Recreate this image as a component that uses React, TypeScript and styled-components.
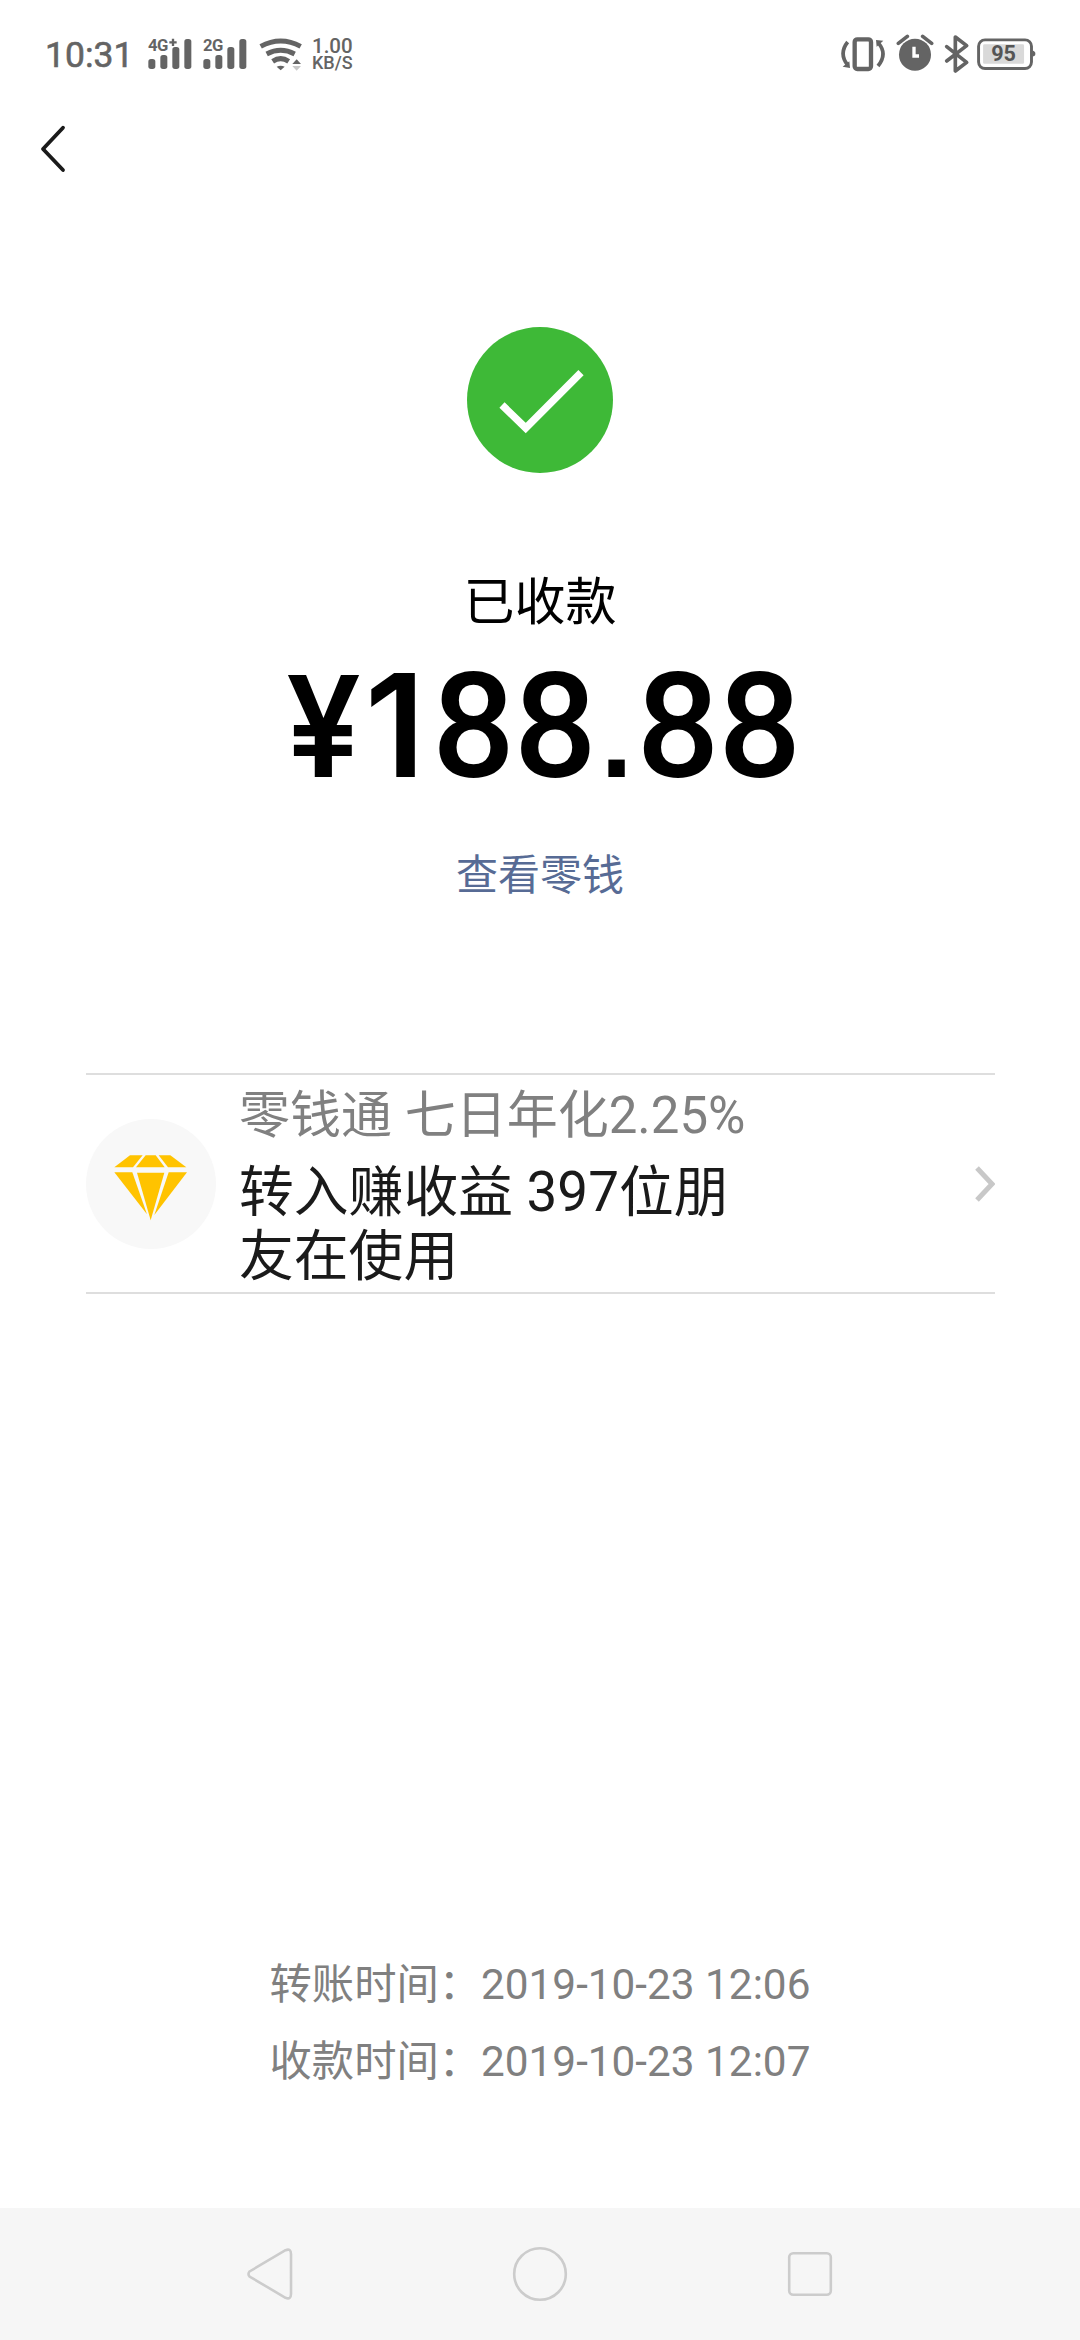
import React from "react";
import styled, { createGlobalStyle } from "styled-components";

const GlobalStyle = createGlobalStyle`
  * { box-sizing: border-box; }
  body {
    margin: 0;
    background: #ffffff;
    font-family: Roboto, "Noto Sans CJK SC", sans-serif;
    -webkit-font-smoothing: antialiased;
  }
`;

const INK = "#646464";

const Screen = styled.main`
  width: 1080px;
  height: 2340px;
  display: flex;
  flex-direction: column;
  background: #ffffff;
  overflow: hidden;
`;

const StatusBar = styled.header`
  height: 90px;
  padding: 20px 44px 0 45px;
  display: flex;
  justify-content: space-between;
  color: ${INK};
`;

const StatusGroup = styled.div`
  display: flex;
  height: 70px;
`;

const Clock = styled.span`
  width: 101px;
  font-size: 35.5px;
  font-weight: 400;
  -webkit-text-stroke: 0.6px ${INK};
  line-height: 70px;
  white-space: nowrap;
`;

const StatusIcon = styled.svg<{ $w: number; $gap?: number }>`
  width: ${(p) => p.$w}px;
  height: 70px;
  margin-right: ${(p) => p.$gap ?? 0}px;
  flex: none;
`;

const Speed = styled.div`
  display: flex;
  flex-direction: column;
  padding-top: 17px;
  font-weight: 500;
  font-size: 20.5px;
  line-height: 19px;
`;

const SpeedUnit = styled.span`
  font-size: 18px;
  line-height: 14px;
`;

const TitleBar = styled.nav`
  height: 120px;
  padding: 34px 0 0 36px;
`;

const Result = styled.section`
  display: flex;
  flex-direction: column;
  align-items: center;
  height: 863px;
  padding-top: 117px;
`;

const ResultLabel = styled.h1`
  margin: 92px 0 0;
  height: 76px;
  line-height: 76px;
  font-size: 51px;
  font-weight: 400;
  color: #000;
`;

const Amount = styled.div`
  align-self: stretch;
  height: 170px;
  padding-left: 286px;
  line-height: 174px;
  font-size: 146px;
  font-weight: 500;
  letter-spacing: -1.2px;
  color: #000;
  white-space: nowrap;
`;

const AmountLead = styled.span`
  font-family: Inter, sans-serif;
  font-size: 143px;
  font-weight: 600;
  line-height: 1px;
  margin-right: 8px;
`;

const Currency = styled.span`
  display: inline-block;
  margin-right: 1px;
  font-size: 140px;
  transform: scaleX(0.95);
  transform-origin: left;
`;

const AmountPoint = styled.span`
  display: inline-block;
  width: 41px;
  text-align: center;
  font-family: "Liberation Sans", sans-serif;
  font-size: 116px;
  font-weight: 700;
  line-height: 1px;
`;

const BalanceLink = styled.a`
  margin-top: 34px;
  height: 62px;
  line-height: 62px;
  font-size: 42px;
  font-weight: 400;
  color: #576b95;
`;

const Promo = styled.section`
  width: 909px;
  height: 221px;
  margin-left: 86px;
  border-top: 2px solid #dedede;
  border-bottom: 2px solid #dedede;
  display: flex;
  align-items: center;
`;

const PromoBadge = styled.div`
  width: 130px;
  height: 130px;
  margin-right: 23px;
  padding-top: 8px;
  border-radius: 50%;
  background: #f8f8f8;
  display: flex;
  align-items: center;
  justify-content: center;
`;

const PromoText = styled.div`
  width: 500px;
  padding-top: 3px;
  display: flex;
  flex-direction: column;
`;

const PromoTitle = styled.span`
  height: 77px;
  font-size: 51px;
  line-height: 66px;
  color: #808080;
  white-space: nowrap;
`;

const PromoBody = styled.span`
  font-size: 54.8px;
  line-height: 64px;
  color: #1a1a1a;
`;

const PromoArrow = styled.svg`
  margin-left: auto;
  width: 21px;
  height: 38px;
`;

const Times = styled.section`
  flex: 1;
  display: flex;
  flex-direction: column;
  align-items: center;
  padding-top: 652px;
`;

const TimeRow = styled.div`
  height: 77px;
  line-height: 77px;
  font-size: 42.3px;
  font-weight: 400;
  color: #808080;
  white-space: pre;
`;

const SystemNav = styled.footer`
  height: 132px;
  padding: 0 135px;
  background: #f6f6f6;
  display: grid;
  grid-template-columns: repeat(3, 1fr);
  align-items: center;
  justify-items: center;
`;

const NavIcon = styled.svg`
  width: 60px;
  height: 60px;
  fill: none;
  stroke: #cccccc;
  stroke-width: 2.6;
`;

function Signal({ label, plus }: { label: string; plus?: boolean }) {
  return (
    <>
      {[
        [7, 117],
        [43, 105],
        [79, 81],
        [115, 57],
      ].map(([x, y]) => (
        <rect key={x} x={x} y={y} width={21} height={147 - y} rx={8} />
      ))}
      <text x={6} y={94} fontSize={50} fontWeight={700} letterSpacing={-2}>
        {label}
      </text>
      {plus && <path d="M70 67H92M81 56V78" stroke={INK} strokeWidth={7} />}
    </>
  );
}

export default function App() {
  return (
    <Screen>
      <GlobalStyle />
      <StatusBar>
        <StatusGroup>
          <Clock>10:31</Clock>
          <StatusIcon $w={48} $gap={7} viewBox="0 0 144 210" fill={INK}>
            <Signal label="4G" plus />
          </StatusIcon>
          <StatusIcon $w={48} $gap={9} viewBox="0 0 144 210" fill={INK}>
            <Signal label="2G" />
          </StatusIcon>
          <StatusIcon $w={46} $gap={8} viewBox="684 0 138 210" fill="none" stroke={INK} strokeWidth={15}>
            <path d="M692 79Q752 47 812 79" />
            <path d="M710 102Q752 80 794 102" />
            <path d="M728 124Q752 108 776 124" />
            <path d="M740 140Q752 134 764 140L752 151Z" fill={INK} stroke="none" />
            <path d="M787 132L800 118L813 132Z" fill={INK} stroke="none" />
            <path d="M787 138L800 152L813 138Z" fill="#c8c8c8" stroke="none" />
          </StatusIcon>
          <Speed>
            1.00
            <SpeedUnit>KB/S</SpeedUnit>
          </Speed>
        </StatusGroup>
        <StatusGroup>
          <StatusIcon $w={46} $gap={10} viewBox="54 0 138 210" fill="none" stroke={INK} strokeWidth={11}>
            <rect x={98} y={58} width={49} height={89} rx={8} strokeWidth={13} />
            <path d="M77 66Q50 100 76 134" />
            <path d="M168 138Q197 102 170 70" />
            <path d="M62 140L84 144L82 124Z" fill={INK} stroke="none" />
            <path d="M184 62L162 60L164 80Z" fill={INK} stroke="none" />
          </StatusIcon>
          <StatusIcon $w={38} $gap={10} viewBox="222 0 114 210" fill="none" stroke={INK} strokeWidth={11} strokeLinecap="round">
            <circle cx={279} cy={104} r={48} fill={INK} stroke="none" />
            <path d="M276 80V108H291" stroke="#fff" strokeWidth={10} strokeLinecap="butt" />
            <path d="M229 70L256 49M302 49L329 70" />
          </StatusIcon>
          <StatusIcon $w={26} $gap={6} viewBox="366 0 78 210" fill="none" stroke={INK} strokeWidth={11} strokeLinejoin="round" strokeLinecap="round">
            <path d="M374 80L434 127L400 153V51L434 77L374 123" />
          </StatusIcon>
          <StatusIcon $w={60} viewBox="462 0 186 210" fill="none" stroke={INK}>
            <rect x={470} y={58} width={164} height={89} rx={20} strokeWidth={9} />
            <path d="M637 91Q646 93 646 101T637 110Z" fill={INK} stroke="none" />
            <rect x={484} y={72} width={127} height={60} rx={4} fill="#d9d9d9" stroke="none" />
            <text x={509} y={125} fontSize={67} fontWeight={700} fill="#555" stroke="none">
              95
            </text>
          </StatusIcon>
        </StatusGroup>
      </StatusBar>

      <TitleBar>
        <svg width="34" height="50" viewBox="0 0 34 50" fill="none" stroke="#1a1a1a" strokeWidth="3.8" strokeLinecap="round" strokeLinejoin="round">
          <path d="M27 3.7L7 25L27 46" />
        </svg>
      </TitleBar>

      <Result>
        <svg width="146" height="146" viewBox="0 0 146 146">
          <circle cx="73" cy="73" r="73" fill="#3eb937" />
          <path d="M35 78L58.7 101L114 45.7" fill="none" stroke="#fff" strokeWidth="7.4" />
        </svg>
        <ResultLabel>已收款</ResultLabel>
        <Amount>
          <AmountLead>
            <Currency>¥</Currency>1
          </AmountLead>
          88<AmountPoint>.</AmountPoint>88
        </Amount>
        <BalanceLink>查看零钱</BalanceLink>
      </Result>

      <Promo>
        <PromoBadge>
          <svg width="74" height="66" viewBox="133 284 222 198" fill="#ffc300">
            <path d="M181 285H219L190 321H134Z" />
            <path d="M228 285H258L285 321H199Z" />
            <path d="M267 285H302L350 321H295Z" />
            <path d="M134 336H188L232 462Z" />
            <path d="M202 337H284L243 480Z" />
            <path d="M297 336H352L254 464Z" />
          </svg>
        </PromoBadge>
        <PromoText>
          <PromoTitle>零钱通 七日年化2.25%</PromoTitle>
          <PromoBody>转入赚收益 397位朋友在使用</PromoBody>
        </PromoText>
        <PromoArrow viewBox="0 0 21 38" fill="none" stroke="#c8c8c8" strokeWidth="5">
          <path d="M3 3L18 19L3 35" />
        </PromoArrow>
      </Promo>

      <Times>
        <TimeRow>转账时间：2019-10-23 12:06</TimeRow>
        <TimeRow>收款时间：2019-10-23 12:07</TimeRow>
      </Times>

      <SystemNav>
        <NavIcon viewBox="0 0 60 60">
          <path d="M9.5 27.5L45.5 6.2Q51 4 51 10V50Q51 56 45.5 53.8L9.5 32.5Q7.5 30 9.5 27.5Z" />
        </NavIcon>
        <NavIcon viewBox="0 0 60 60">
          <circle cx="30" cy="30" r="25.8" />
        </NavIcon>
        <NavIcon viewBox="0 0 60 60">
          <rect x="9.2" y="9.2" width="41.6" height="41.6" rx="4" />
        </NavIcon>
      </SystemNav>
    </Screen>
  );
}
